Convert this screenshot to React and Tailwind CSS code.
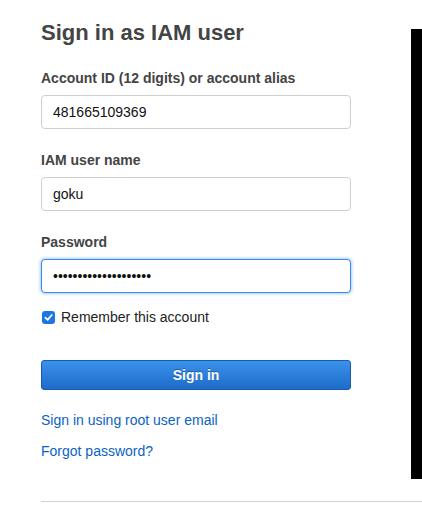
import React from 'react';

const Field = ({ label, value, type = 'text', focused }) => (
  <div className="pt-[2px] mb-[20px]">
    <label className="block text-[14px] leading-[18px] font-bold text-[#444] mb-[8px]">{label}</label>
    <input
      type={type}
      readOnly
      value={value}
      className={`block w-[310px] h-[34px] px-[11px] rounded-[4px] bg-white text-[14px] text-[#111] outline-none ${
        focused
          ? 'border border-[#3b8de6] shadow-[0_0_3px_1px_rgba(59,141,230,0.45)]'
          : 'border border-[#cfcfcf]'
      }`}
      style={{ fontFamily: "'Liberation Sans', Arial, sans-serif" }}
    />
  </div>
);

const App = () => {
  return (
    <div
      className="w-[422px] h-[506px] overflow-hidden bg-white"
      style={{ fontFamily: "'Liberation Sans', Arial, sans-serif" }}
    >
      <div className="flex">
        <div className="pl-[41px] pt-[19px] w-[360px]">
          <h1 className="text-[22px] leading-[28px] font-bold text-[#444] mb-[20px]">Sign in as IAM user</h1>

          <Field label="Account ID (12 digits) or account alias" value="481665109369" />
          <Field label="IAM user name" value="goku" />
          <div className="-mb-[6px]">
            <Field label="Password" value="12345678901234567890" type="password" focused />
          </div>

          <div className="flex items-center h-[20px]">
            <span className="w-[13px] h-[13px] ml-[1px] rounded-[3px] bg-[#1d76e6] flex items-center justify-center">
              <svg width="9" height="9" viewBox="0 0 10 10">
                <path d="M1.5 5.2 L4 7.6 L8.6 2.2" fill="none" stroke="#fff" strokeWidth="1.9" strokeLinecap="round" strokeLinejoin="round" />
              </svg>
            </span>
            <span className="ml-[6px] text-[14px] text-[#222]">Remember this account</span>
          </div>

          <button className="mt-[33px] w-[310px] h-[30px] rounded-[3px] border border-[#1b5ca8] bg-gradient-to-b from-[#3b91ea] to-[#1d6ccb] text-white text-[14px] font-bold [text-shadow:0_-1px_0_rgba(0,0,0,0.35)]">
            Sign in
          </button>

          <div className="mt-[20px] flex flex-col gap-[11px] text-[14px] leading-[20px] text-[#0c63c4]">
            <a>Sign in using root user email</a>
            <a>Forgot password?</a>
          </div>
        </div>
        <div className="flex-1" />
        <div className="w-[11px] h-[450px] mt-[29px] bg-black" />
      </div>
      <div className="ml-[41px] mt-[22px] h-px bg-[#d0d0d0]" />
    </div>
  );
};

export default App;
